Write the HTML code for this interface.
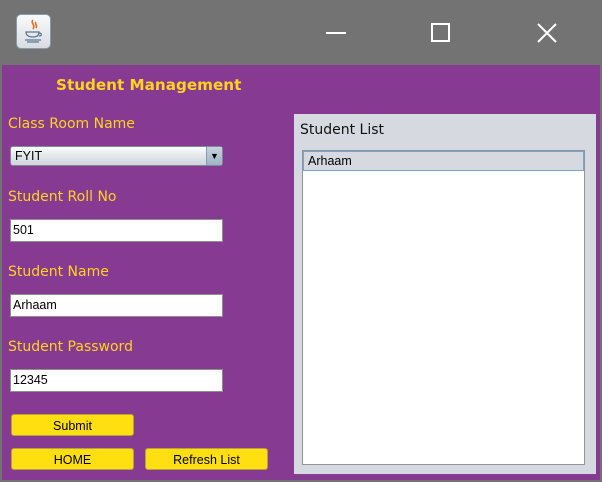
<html><head><style>
body{margin:0;width:602px;height:482px;background:#737373;position:relative;overflow:hidden;font-family:"Liberation Sans",sans-serif}
.a{position:absolute}
.main{left:2px;top:65px;width:598px;height:415px;background:#873a92}
.lbl{position:absolute;left:8px;color:#ffd21e;font-size:14px;font-family:"DejaVu Sans",sans-serif;font-weight:normal}
.tf{position:absolute;left:10px;width:209px;height:21px;background:#fff;border:1px solid #8e8e8e;font-size:12.5px;line-height:21px;padding-left:2px;box-sizing:content-box}
.btn{position:absolute;height:22px;background:#ffdf10;border:1px solid #b8a040;border-radius:3px;font-size:12.5px;text-align:center;line-height:22px;box-sizing:border-box}
</style></head><body>
<div class="a" style="left:16px;top:14px;width:35px;height:35px;border-radius:5px;background:linear-gradient(#fafafa,#d8dde2);border:1px solid #8a9aa8;box-sizing:border-box">
<svg width="33" height="33" viewBox="0 0 33 33"><path d="M16 5c-3 3 3 5 0 9M19 7c-2 2 2 3 0 6" stroke="#e07020" stroke-width="1.6" fill="none"/><path d="M9 17h13c0 4-3 5-6 5s-7-1-7-5zM22 18c3 0 3 3 0 3" stroke="#5a7890" stroke-width="1.3" fill="none"/><path d="M8 25h16M10 27h12" stroke="#5a7890" stroke-width="1.3"/></svg></div>
<svg class="a" style="left:326px;top:22px" width="240" height="22"><path d="M0 11h20" stroke="#fff" stroke-width="2"/><rect x="106" y="2" width="17" height="17" stroke="#fff" stroke-width="2" fill="none"/><path d="M212 2l18 18M230 2l-18 18" stroke="#fff" stroke-width="2"/></svg>
<div class="a main"></div>
<div class="a" style="left:56px;top:76px;color:#ffd21e;font-weight:bold;font-size:15.2px;font-family:'DejaVu Sans',sans-serif">Student Management</div>
<div class="lbl" style="top:116px">Class Room Name</div>
<div class="a" style="left:10px;top:146px;width:213px;height:20px;border:1px solid #7f8a96;border-radius:3px;background:linear-gradient(#fbfcfd,#dfe3e8 60%,#cfd5dc);box-sizing:border-box;font-size:12.5px;line-height:19px;padding-left:4px">FYIT<div class="a" style="right:0;top:0;width:15px;height:18px;background:linear-gradient(#c6d3df,#9fb3c6);border-left:1px solid #8a9aa8;font-size:9px;text-align:center;line-height:18px">▼</div></div>
<div class="lbl" style="top:189px">Student Roll No</div>
<div class="tf" style="top:219px">501</div>
<div class="lbl" style="top:264px">Student Name</div>
<div class="tf" style="top:294px">Arhaam</div>
<div class="lbl" style="top:339px">Student Password</div>
<div class="tf" style="top:369px">12345</div>
<div class="btn" style="left:11px;top:414px;width:123px">Submit</div>
<div class="btn" style="left:11px;top:448px;width:123px">HOME</div>
<div class="btn" style="left:145px;top:448px;width:123px">Refresh List</div>
<div class="a" style="left:294px;top:114px;width:302px;height:360px;background:#d6d9e0"></div>
<div class="a" style="left:300px;top:122px;font-size:14px;font-family:'DejaVu Sans',sans-serif;color:#111">Student List</div>
<div class="a" style="left:302px;top:150px;width:283px;height:315px;background:#fff;border:1px solid #8e959e;box-sizing:border-box"></div>
<div class="a" style="left:303px;top:151px;width:281px;height:20px;background:#d6d9e0;border:1px solid #7fa3c8;box-sizing:border-box;font-size:12.5px;line-height:18px;padding-left:4px">Arhaam</div>
</body></html>
